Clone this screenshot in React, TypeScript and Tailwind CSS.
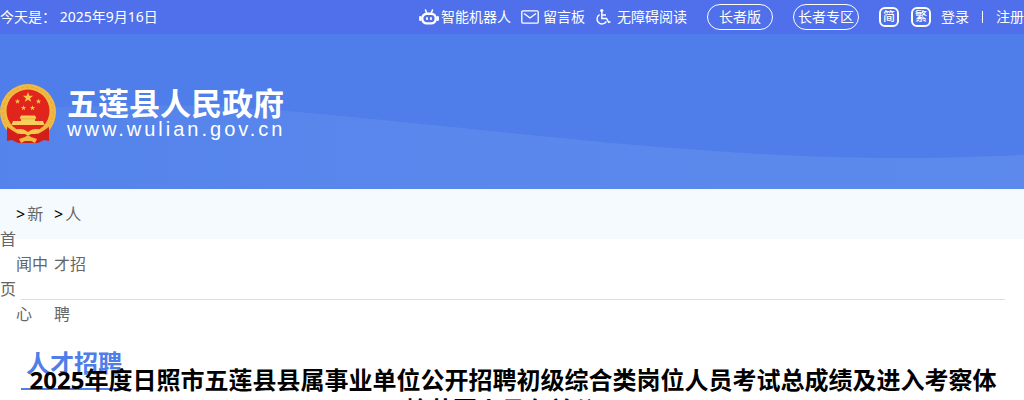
import { ReactNode } from "react";

const MAIN_FONT = "font-['Noto_Sans','Noto_Sans_CJK_SC',sans-serif]";

const crumbs = [
	{ lines: ["新", "闻中", "心"] },
	{ lines: ["人", "才招", "聘"] },
];

export default function App() {
	return (
		<div className={`${MAIN_FONT} overflow-hidden bg-white text-black`}>
			<header className="bg-[#4f7de9]">
				<TopBar />
				<Banner />
			</header>
			<Breadcrumb />
			<Article />
		</div>
	);
}

function TopBar() {
	return (
		<div className="flex h-[34px] items-center justify-between bg-[#506fea] text-sm whitespace-nowrap text-white">
			<p>今天是： 2025年9月16日</p>
			<nav className="flex items-center">
				<a href="#robot" className="flex items-center gap-0.5">
					<RobotIcon />
					智能机器人
				</a>
				<a href="#message" className="ml-2.5 flex items-center gap-1">
					<MailIcon />
					留言板
				</a>
				<a href="#accessible" className="ml-2.5 flex items-center gap-1.5">
					<WheelchairIcon />
					无障碍阅读
				</a>
				<Pill href="#elder">长者版</Pill>
				<Pill href="#elder-zone">长者专区</Pill>
				<a
					href="#simplified"
					className="ml-5 flex h-5 w-5 items-center justify-center rounded-md border-2 border-white text-xs font-medium"
				>
					简
				</a>
				<a
					href="#traditional"
					className="ml-3 flex h-5 w-5 items-center justify-center rounded-md border-2 border-white text-xs font-medium"
				>
					繁
				</a>
				<a href="#login" className="ml-2.5">
					登录
				</a>
				<span className="mx-[13px] h-3 w-px bg-white" />
				<a href="#register">注册</a>
			</nav>
		</div>
	);
}

function Pill({ href, children }: { href: string; children: ReactNode }) {
	return (
		<a
			href={href}
			className="ml-5 flex h-[26px] w-[66px] items-center justify-center rounded-full border border-white"
		>
			{children}
		</a>
	);
}

function Banner() {
	return (
		<div className="relative flex h-[155px] items-center pt-1">
			<svg
				className="absolute inset-0 h-full w-full"
				viewBox="0 0 1024 155"
				preserveAspectRatio="none"
				aria-hidden="true"
			>
				<defs>
					<linearGradient id="wave" x1="0" x2="1" y1="0" y2="0">
						<stop offset="0" stopColor="#5483eb" />
						<stop offset="0.4" stopColor="#5987ec" />
						<stop offset="1" stopColor="#5c89eb" />
					</linearGradient>
				</defs>
				<path
					d="M0 76 C100 70 200 69 300 78 C500 96 700 124 900 124 C950 124 990 122 1024 121 V155 H0 Z"
					fill="url(#wave)"
				/>
			</svg>
			<a href="#home" className="relative flex items-center gap-[11px] text-white">
				<Emblem />
				<span className="flex flex-col">
					<span className="text-[31px] leading-[31px] font-bold">五莲县人民政府</span>
					<span className="font-['Liberation_Sans',sans-serif] text-xl leading-5 tracking-[3px]">
						www.wulian.gov.cn
					</span>
				</span>
			</a>
		</div>
	);
}

function Breadcrumb() {
	return (
		<nav className="h-[50px] bg-[#f5fafe] text-base leading-[25px] whitespace-nowrap text-[#666]">
			<div className="flex pt-[13px]">
				<a href="#home" className="flex w-4 flex-col gap-[25px] pt-[25px]">
					<span>首</span>
					<span>页</span>
				</a>
				{crumbs.map((crumb) => (
					<div key={crumb.lines[0]} className="flex w-[38px] flex-col gap-[25px]">
						<a href="#section" className="flex gap-0.5">
							<span className="text-black">&gt;</span>
							{crumb.lines[0]}
						</a>
						<a href="#section">{crumb.lines[1]}</a>
						<a href="#section">{crumb.lines[2]}</a>
					</div>
				))}
			</div>
		</nav>
	);
}

function Article() {
	return (
		<main className="pt-[60px] pr-[19px] pl-[21px]">
			<hr className="border-[#ddd]" />
			<div className="flex h-[90px] items-end">
				<h2 className="h-[42px] border-b-2 border-[#4f7de9] px-[5px] text-2xl leading-[30px] font-bold text-[#4f7de9]">
					人才招聘
				</h2>
			</div>
			<h1 className="-mt-[25px] text-center text-2xl leading-[30px] font-bold">
				2025年度日照市五莲县县属事业单位公开招聘初级综合类岗位人员考试总成绩及进入考察体检范围人员有关公示
			</h1>
		</main>
	);
}

function RobotIcon() {
	return (
		<svg width="20" height="18" viewBox="0 0 20 18" fill="none" stroke="white" aria-hidden="true">
			<path d="M6.5 2 L7.5 4.5 M13.5 2 L12.5 4.5" strokeWidth="1.6" strokeLinecap="round" />
			<rect x="3.2" y="5.8" width="13.6" height="9.6" rx="4.6" strokeWidth="2.4" />
			<path d="M1.2 9 V12 M18.8 9 V12" strokeWidth="2.2" strokeLinecap="round" />
			<path d="M8 10 V11.2 M12 10 V11.2" strokeWidth="1.8" strokeLinecap="round" />
		</svg>
	);
}

function MailIcon() {
	return (
		<svg width="18" height="14" viewBox="0 0 18 14" fill="none" stroke="white" strokeWidth="1.3" aria-hidden="true">
			<rect x="0.8" y="0.8" width="16.4" height="12.4" rx="1.2" />
			<path d="M3 3.5 L9 8 L15 3.5" />
		</svg>
	);
}

function WheelchairIcon() {
	return (
		<svg width="16" height="18" viewBox="0 0 16 18" fill="none" stroke="white" strokeWidth="1.4" aria-hidden="true">
			<circle cx="6.8" cy="2.6" r="1.6" fill="white" stroke="none" />
			<path d="M6.8 4 V10.5 H11.6 L13.6 14.4 L15.6 13.6 M6.8 7 H11" />
			<path d="M4.6 6.6 A5 5 0 1 0 11.4 13.4" />
		</svg>
	);
}

function Star({ x, y, r }: { x: number; y: number; r: number }) {
	return (
		<path
			transform={`translate(${x} ${y}) scale(${r})`}
			d="M0 -1 L.24 -.32 L.95 -.31 L.38 .12 L.59 .81 L0 .4 L-.59 .81 L-.38 .12 L-.95 -.31 L-.24 -.32 Z"
			fill="#f7c94b"
		/>
	);
}

function Emblem() {
	return (
		<svg width="56" height="60" viewBox="0 0 56 60" role="img" aria-label="国徽">
			<circle cx="28" cy="28" r="28" fill="#f0b943" />
			<circle cx="28" cy="28" r="25" fill="none" stroke="#e3a638" strokeWidth="1" strokeDasharray="3 2" />
			<circle cx="28" cy="27" r="21.5" fill="#e1251c" />
			<Star x={28} y={13.5} r={5.4} />
			<Star x={17.5} y={17.5} r={2.8} />
			<Star x={38.5} y={17.5} r={2.8} />
			<Star x={23.5} y={24} r={2.8} />
			<Star x={32.5} y={24} r={2.8} />
			<path
				d="M19.5 34.5 L21 31.5 H35 L36.5 34.5 H35 V37 H43 L44.5 41 H11.5 L13 37 H21 V34.5 Z"
				fill="#f7d05a"
			/>
			<path d="M20 34.8 H36" stroke="#e3a638" strokeWidth="0.8" />
			<path
				d="M7 43 L13 47 L18 50 L22 48 L28 50 L34 48 L38 50 L43 47 L49 43 V57 L44 56 L38 59 H18 L12 56 L7 57 Z"
				fill="#d41e19"
			/>
			<path
				d="M15 46 C20 44 24 45 28 48 C32 45 36 44 41 46 L36 50 L31 50 L28 52 L25 50 L20 50 Z"
				fill="#f7c94b"
			/>
			<path d="M19 55 L25 53 Q28 50.5 31 53 L37 55 L35 59 L31 57 H25 L21 59 Z" fill="#f0b943" />
		</svg>
	);
}
